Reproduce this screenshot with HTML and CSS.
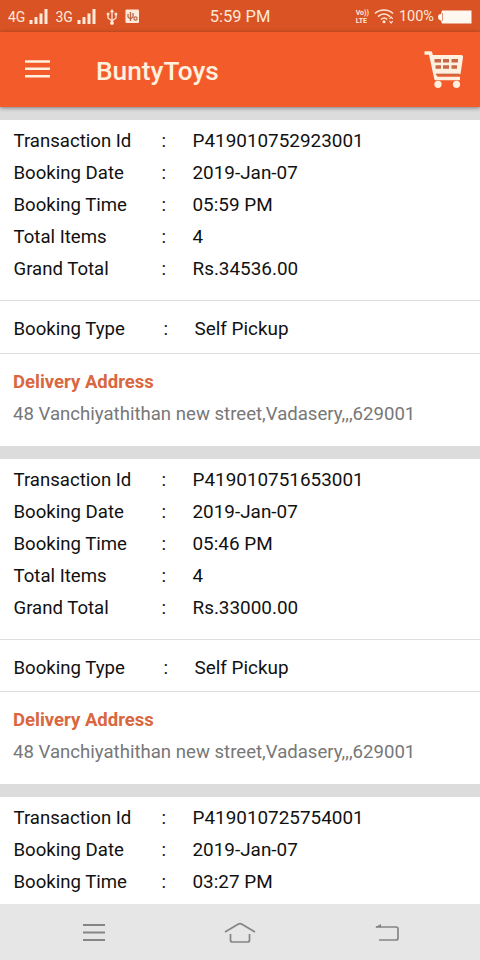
FILE: index.html
```html
<!DOCTYPE html>
<html lang="en">
<head>
<meta charset="utf-8">
<title>BuntyToys</title>
<link rel="stylesheet" href="styles.css">
</head>
<body>
<div class="screen">
  <div class="status">
    <div class="status-left">
      <span>4G</span>
      <svg class="signal" width="20" height="16" viewBox="0 0 20 16"><path d="M2 11v4M7 8v7M12 4.500v10.500M17 0v15" stroke="currentColor" stroke-width="3"/></svg>
      <span>3G</span>
      <svg class="signal signal-two" width="20" height="16" viewBox="0 0 20 16"><path d="M2 11v4M7 8v7M12 4.500v10.500M17 0v15" stroke="currentColor" stroke-width="3"/></svg>
      <svg class="usb" width="12" height="16" viewBox="0 0 12 16" fill="none" stroke="currentColor" stroke-width="1.300"><path d="M6 2v12M2 6v3l4 3 4-3V5.500"/><path d="M6 0l2.200 3.200H3.800z" fill="currentColor" stroke="none"/><circle cx="6" cy="14" r="1.900" fill="currentColor" stroke="none"/><path d="M.8 5h2.600M8.600 5h2.600" stroke-width="2.400"/></svg>
      <svg width="15" height="15" viewBox="0 0 15 15"><rect x=".5" y=".5" width="13.500" height="13.500" rx="1" fill="currentColor"/><path d="M3 5v3l2.500 2L8 8V4M5.500 3v9" fill="none" stroke="#b96a4a" stroke-width="1.300"/><circle cx="10.500" cy="9.500" r="1.600" fill="none" stroke="#b96a4a" stroke-width="1.200"/></svg>
    </div>
    <span class="clock">5:59 PM</span>
    <div class="status-right">
      <div class="volte"><span>Vo))</span><span>LTE</span></div>
      <svg class="wifi" width="21" height="15" viewBox="0 0 21 15" fill="none" stroke="currentColor" stroke-width="1.500"><path d="M1 4.500C6-.2 14-.2 19 4.500M4 7.600c3.500-3.400 8.500-3.400 12 0M7 10.500c2-1.800 4.500-1.800 6.200 0"/><circle cx="10" cy="12.700" r="1.500" fill="currentColor" stroke="none"/><path d="M15.500 10l1.600-2 1.600 2M15.500 12l1.600 2 1.600-2" stroke-width="1.200"/></svg>
      <span class="percent">100%</span>
      <svg width="36" height="14" viewBox="0 0 36 14"><path d="M4 .5h29.500v13H4l-1-3Q0 10 0 7t3-3z" fill="#fff8f0"/><path d="M4.500 3v8" stroke="#d99678"/></svg>
    </div>
  </div>
  <header class="appbar">
    <svg class="burger" width="26" height="20" viewBox="0 0 26 20"><path d="M0 2.500h25M0 9.800h25M0 17.200h25" stroke="currentColor" stroke-width="2.500"/></svg>
    <h1>BuntyToys</h1>
    <svg class="cart" width="42" height="40" viewBox="0 0 42 40"><path d="M1.500 3h6l5.500 25.500h24" fill="none" stroke="currentColor" stroke-width="3.600" stroke-linejoin="round"/><path d="M9 5h29q2.500 0 2 2.500L37.500 24H12z" fill="currentColor"/><path d="M11.500 10.800h6.500M20 10.800h6M28.500 10.800h6.500M12.500 17H18M20 17h6M28.500 17h5.500" stroke="#c96846" stroke-width="3.600"/><path d="M13 24.500h23" stroke="#c96846" stroke-width="1.700"/><circle cx="15" cy="34.300" r="3.600" fill="currentColor"/><circle cx="33.500" cy="34.300" r="3.600" fill="currentColor"/></svg>
  </header>
  <main class="orders">
    <article class="order">
      <dl class="details">
        <div class="row"><dt>Transaction Id</dt><span>:</span><dd>P419010752923001</dd></div>
        <div class="row"><dt>Booking Date</dt><span>:</span><dd>2019-Jan-07</dd></div>
        <div class="row"><dt>Booking Time</dt><span>:</span><dd>05:59 PM</dd></div>
        <div class="row"><dt>Total Items</dt><span>:</span><dd>4</dd></div>
        <div class="row"><dt>Grand Total</dt><span>:</span><dd>Rs.34536.00</dd></div>
      </dl>
      <dl class="type"><div class="row"><dt>Booking Type</dt><span>:</span><dd>Self Pickup</dd></div></dl>
      <section class="address"><h2>Delivery Address</h2><p>48 Vanchiyathithan new street,Vadasery,,,629001</p></section>
    </article>
    <article class="order">
      <dl class="details">
        <div class="row"><dt>Transaction Id</dt><span>:</span><dd>P419010751653001</dd></div>
        <div class="row"><dt>Booking Date</dt><span>:</span><dd>2019-Jan-07</dd></div>
        <div class="row"><dt>Booking Time</dt><span>:</span><dd>05:46 PM</dd></div>
        <div class="row"><dt>Total Items</dt><span>:</span><dd>4</dd></div>
        <div class="row"><dt>Grand Total</dt><span>:</span><dd>Rs.33000.00</dd></div>
      </dl>
      <dl class="type"><div class="row"><dt>Booking Type</dt><span>:</span><dd>Self Pickup</dd></div></dl>
      <section class="address"><h2>Delivery Address</h2><p>48 Vanchiyathithan new street,Vadasery,,,629001</p></section>
    </article>
    <article class="order">
      <dl class="details">
        <div class="row"><dt>Transaction Id</dt><span>:</span><dd>P419010725754001</dd></div>
        <div class="row"><dt>Booking Date</dt><span>:</span><dd>2019-Jan-07</dd></div>
        <div class="row"><dt>Booking Time</dt><span>:</span><dd>03:27 PM</dd></div>
      </dl>
    </article>
  </main>
  <nav class="navbar">
    <svg width="24" height="20" viewBox="0 0 24 20"><path d="M1 2h22M1 9.500h22M1 17h22" stroke="currentColor" stroke-width="1.800"/></svg>
    <svg width="32" height="22" viewBox="0 0 32 22" fill="none" stroke="currentColor" stroke-width="1.700"><path d="M1 10L14 2.300q2-1.200 4 0L31 10M6.500 12v6q0 2 2 2h15q2 0 2-2v-6"/></svg>
    <svg width="26" height="20" viewBox="0 0 26 20" fill="none" stroke="currentColor" stroke-width="1.700"><path d="M2 4h20q2 0 2 2v9q0 2-2 2H5"/><path d="M1 4.300L7 1v3.300z" fill="currentColor" stroke="none"/></svg>
  </nav>
</div>
</body>
</html>
```
FILE: styles.css
```css
* { box-sizing: border-box; margin: 0; padding: 0; }
body { font-family: Roboto, "Liberation Sans", sans-serif; }
svg { display: block; flex: none; }
.screen { width: 480px; height: 960px; display: flex; flex-direction: column; overflow: hidden; background: #fff; }
.status { flex: none; height: 32px; display: grid; grid-template-columns: 1fr auto 1fr; align-items: center; padding: 1px 6px 0 8px; background: #d95325; color: #ffe9d8; font-size: 14px; }
.status-left, .status-right { display: flex; align-items: center; }
.signal { margin: 0 6px 0 4px; }
.signal-two { margin-right: 9px; }
.usb { margin-right: 7px; }
.clock { font-size: 16.5px; margin-right: 2px; }
.status-right { justify-content: flex-end; }
.volte { display: flex; flex-direction: column; font-size: 7px; line-height: 8px; font-weight: 700; margin-right: 5px; }
.wifi { margin-right: 4px; }
.percent { margin-right: 4px; font-size: 14.5px; }
.appbar { flex: none; height: 75px; display: flex; align-items: center; padding: 0 15px 0 25px; background: #f45b2b; color: #fff0df; position: relative; box-shadow: 0 1px 4px rgba(0,0,0,.45); }
.burger { margin-top: -1px; }
.appbar h1 { flex: 1; margin: 3px 0 0 45px; font-size: 26.3px; font-weight: 500; line-height: 32px; }
.orders { flex: 1; min-height: 0; overflow: hidden; display: flex; flex-direction: column; gap: 13px; padding-top: 13px; background: #dcdcdc; }
.order { flex: none; background: #fff; font-size: 18.9px; color: #111; }
.row { display: grid; grid-template-columns: 148px 31px 1fr; height: 32px; line-height: 32px; }
.row dt { font-size: 18.6px; }
.details { padding: 5px 13px 15px 13.5px; }
.type { padding: 12px 13px 7.67px 13.5px; border-top: 1px solid #dedede; border-bottom: 1px solid #dedede; }
.type .row { grid-template-columns: 150px 31px 1fr; }
.address { padding: 12px 13px 16px; line-height: 32px; }
.address h2 { font-size: 18.5px; font-weight: 700; color: #d96740; }
.address p { font-size: 18.6px; color: #777; white-space: nowrap; }
.navbar { flex: none; height: 56px; display: flex; justify-content: space-between; align-items: center; padding: 1px 80px 0 82px; background: #e6e6e6; color: #858585; }
```
